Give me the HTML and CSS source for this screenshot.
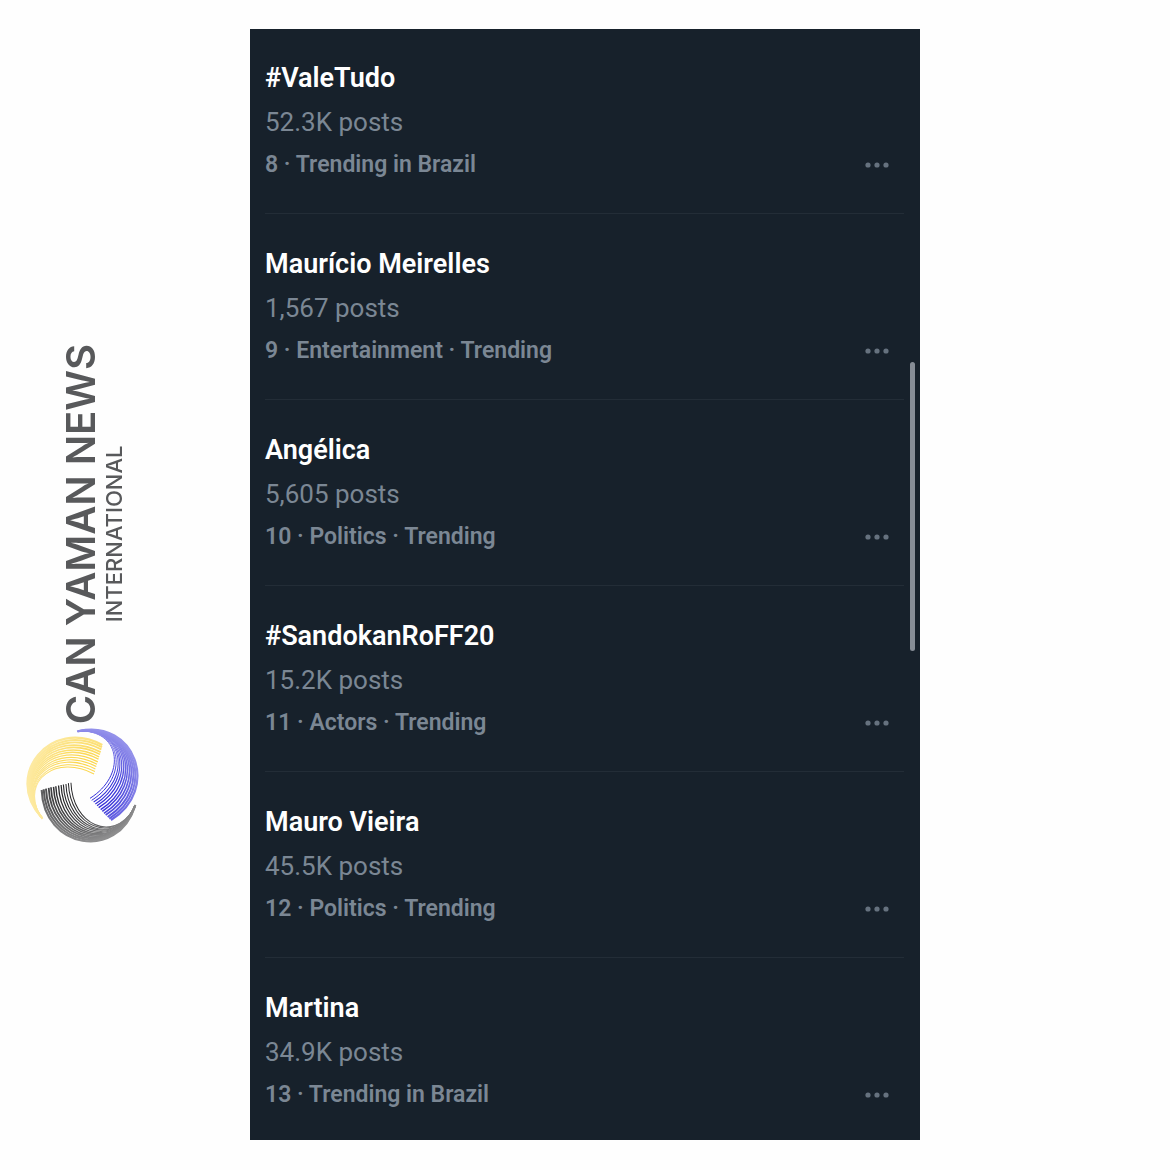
FILE: index.html
```
<!DOCTYPE html>
<html lang="en">
<head>
    <meta charset="UTF-8">
    <meta name="viewport" content="width=device-width, initial-scale=1.0">
    <title>Trending in Brazil</title>
    <link rel="stylesheet" href="styles.css">
</head>
<body>
    <!-- Shared shapes -->
    <svg class="defs" aria-hidden="true">
        <symbol id="dots" viewBox="0 0 24 6">
            <circle cx="3" cy="3" r="2.6"/>
            <circle cx="12" cy="3" r="2.6"/>
            <circle cx="21" cy="3" r="2.6"/>
        </symbol>
        <!-- Lines fade towards the rim of the ball -->
        <radialGradient id="fade" gradientUnits="userSpaceOnUse" cx="222" cy="228" r="170">
            <stop offset=".5" stop-color="#fff"/>
            <stop offset=".72" stop-color="#ccc"/>
            <stop offset=".9" stop-color="#999"/>
            <stop offset="1" stop-color="#888"/>
        </radialGradient>
        <mask id="rim" maskUnits="userSpaceOnUse" x="40" y="40" width="370" height="370">
            <rect x="40" y="40" width="370" height="370" fill="url(#fade)"/>
        </mask>
        <g id="wing" fill="none" stroke="currentColor" mask="url(#rim)">
            <path stroke-width="3" d="M215 66C330 70 345 200 237 268"/>
            <path stroke-width="3" d="M213 66C333 67 354 203 242 274"/>
            <path stroke-width="3.2" d="M212 66C337 63 363 207 248 279"/>
            <path stroke-width="3.4" d="M210 66C340 60 371 210 253 285"/>
            <path stroke-width="3.7" d="M208 66C343 57 380 213 258 290"/>
            <path stroke-width="4" d="M207 66C347 53 389 217 263 296"/>
            <path stroke-width="4.3" d="M205 66C350 50 398 220 269 302"/>
            <path stroke-width="4.6" d="M203 66C353 47 406 223 274 307"/>
            <path stroke-width="5" d="M202 67C357 43 415 227 279 313"/>
            <path stroke-width="5.4" d="M200 67C360 40 424 230 284 318"/>
            <path stroke-width="5.8" d="M198 67C363 37 433 233 290 324"/>
            <path stroke-width="6.2" d="M200 67C367 33 441 237 295 329"/>
            <path stroke-width="6.4" d="M204 66C370 30 450 240 300 333"/>
        </g>
    </svg>

    <div class="page">
        <aside class="brand">
            <div class="brand-text">
                <p class="brand-name">CAN YAMAN NEWS</p>
                <p class="brand-sub">INTERNATIONAL</p>
            </div>
            <svg class="brand-logo" viewBox="54 60 336 336" role="img" aria-label="Can Yaman News">
                <use class="wing-blue" href="#wing"/>
                <use class="wing-yellow" href="#wing" transform="rotate(-120 222 228)"/>
                <use class="wing-gray" href="#wing" transform="rotate(120 222 228)"/>
            </svg>
        </aside>

        <main class="panel">
            <ul class="trends">
                <li class="trend">
                    <h2 class="trend-title">#ValeTudo</h2>
                    <p class="trend-posts">52.3K posts</p>
                    <div class="trend-footer">
                        <p class="trend-meta">8 · Trending in Brazil</p>
                        <button class="more" aria-label="More"><svg><use href="#dots"/></svg></button>
                    </div>
                </li>
                <li class="trend">
                    <h2 class="trend-title">Maurício Meirelles</h2>
                    <p class="trend-posts">1,567 posts</p>
                    <div class="trend-footer">
                        <p class="trend-meta">9 · Entertainment · Trending</p>
                        <button class="more" aria-label="More"><svg><use href="#dots"/></svg></button>
                    </div>
                </li>
                <li class="trend">
                    <h2 class="trend-title">Angélica</h2>
                    <p class="trend-posts">5,605 posts</p>
                    <div class="trend-footer">
                        <p class="trend-meta">10 · Politics · Trending</p>
                        <button class="more" aria-label="More"><svg><use href="#dots"/></svg></button>
                    </div>
                </li>
                <li class="trend">
                    <h2 class="trend-title">#SandokanRoFF20</h2>
                    <p class="trend-posts">15.2K posts</p>
                    <div class="trend-footer">
                        <p class="trend-meta">11 · Actors · Trending</p>
                        <button class="more" aria-label="More"><svg><use href="#dots"/></svg></button>
                    </div>
                </li>
                <li class="trend">
                    <h2 class="trend-title">Mauro Vieira</h2>
                    <p class="trend-posts">45.5K posts</p>
                    <div class="trend-footer">
                        <p class="trend-meta">12 · Politics · Trending</p>
                        <button class="more" aria-label="More"><svg><use href="#dots"/></svg></button>
                    </div>
                </li>
                <li class="trend">
                    <h2 class="trend-title">Martina</h2>
                    <p class="trend-posts">34.9K posts</p>
                    <div class="trend-footer">
                        <p class="trend-meta">13 · Trending in Brazil</p>
                        <button class="more" aria-label="More"><svg><use href="#dots"/></svg></button>
                    </div>
                </li>
            </ul>
            <div class="scroll-thumb"></div>
        </main>
    </div>
</body>
</html>
```
FILE: styles.css
```
* {
    box-sizing: border-box;
}
body {
    margin: 0;
    background-color: #fefefe;
    font-family: Roboto, "Liberation Sans", sans-serif;
}
h2, p, ul {
    margin: 0;
    padding: 0;
}
.defs {
    position: absolute;
    width: 0;
    height: 0;
}
.page {
    display: grid;
    grid-template-columns: 250px 1fr 250px;
    padding: 29px 0;
}

/* Brand */
.brand {
    display: flex;
    flex-direction: column;
    align-items: flex-start;
    align-self: center;
    gap: 4px;
    padding: 16px 0 0 29px;
}
.brand-text {
    display: flex;
    flex-direction: column;
    margin-left: 29px;
    color: #58595b;
    font-family: Inter, "Liberation Sans", sans-serif;
    text-align: center;
    writing-mode: vertical-rl;
    transform: rotate(180deg);
}
.brand-name {
    font-size: 40px;
    font-weight: 600;
    line-height: 46px;
}
.brand-sub {
    font-size: 22px;
    font-weight: 500;
    line-height: 20px;
}
.brand-logo {
    width: 112px;
    height: 112px;
    overflow: visible;
}
.wing-blue {
    color: #3530d8;
}
.wing-yellow {
    color: #fbd750;
}
.wing-gray {
    color: #2a2a2c;
}

/* Trends */
.panel {
    position: relative;
    background-color: #17212b;
}
.trends {
    list-style: none;
    padding: 0 16px 0 15px;
}
.trend {
    padding: 28px 0 27px;
    border-bottom: 1px solid #232d37;
}
.trend:first-child {
    padding-top: 27px;
}
.trend:last-child {
    padding-bottom: 24px;
    border-bottom: none;
}
.trend-title {
    color: #fff;
    font-size: 27px;
    font-weight: 600;
    line-height: 44px;
}
.trend-posts {
    color: #7b8794;
    font-size: 26px;
    line-height: 44px;
}
.trend-footer {
    display: flex;
    align-items: center;
    justify-content: space-between;
}
.trend-meta {
    color: #7b8794;
    font-size: 23px;
    font-weight: 600;
    line-height: 42px;
}
.more {
    display: flex;
    padding: 10px 15px;
    border: none;
    background: none;
    cursor: pointer;
}
.more svg {
    width: 24px;
    height: 6px;
    fill: #66727f;
}
.scroll-thumb {
    position: absolute;
    top: 30%;
    right: 5px;
    width: 5px;
    height: 26%;
    border-radius: 3px;
    background-color: #868d96;
}
```
